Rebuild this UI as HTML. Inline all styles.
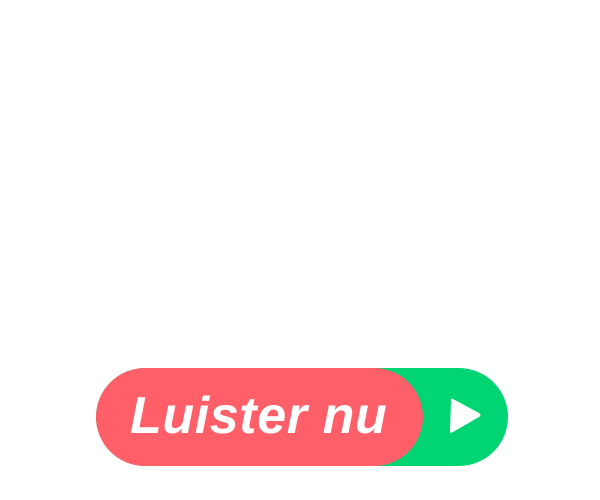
<!DOCTYPE html>
<html><head><style>
html,body{margin:0;padding:0;background:#fff;width:600px;height:500px;overflow:hidden}
.g{position:absolute;left:96px;top:368px;width:412px;height:98px;border-radius:49px;background:#00d473}
.r{position:absolute;left:96px;top:368px;width:327px;height:98px;border-radius:49px;background:#fe5f69}
.t{position:absolute;left:130px;top:378px;font:italic bold 52px "Liberation Sans",sans-serif;color:#fff;letter-spacing:0.6px;line-height:76px;white-space:nowrap}
svg{position:absolute;left:446px;top:396px}
</style></head><body>
<div class="g"></div><div class="r"></div>
<div class="t">Luister nu</div>
<svg width="40" height="42" viewBox="0 0 40 42"><path d="M5 5 Q4 2 7 3 L33 17 Q36 19 33 21 L7 36 Q4 38 4 35 Z" fill="#fff"/></svg>
</body></html>
